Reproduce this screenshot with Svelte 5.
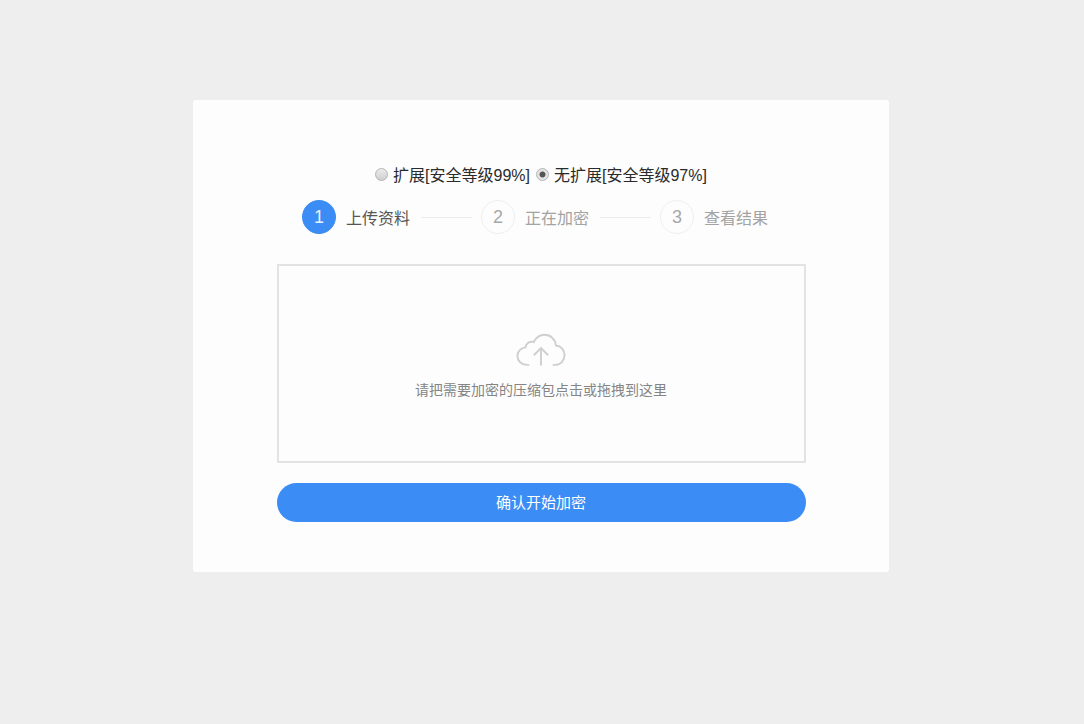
<script>
  let mode = $state('plain')

  const steps = [
    { n: 1, label: '上传资料', active: true },
    { n: 2, label: '正在加密', active: false },
    { n: 3, label: '查看结果', active: false },
  ]
</script>

<main class="page">
  <section class="card">
    <div class="modes">
      <label class="mode">
        <input type="radio" name="mode" value="ext" bind:group={mode} />
        <span>扩展[安全等级99%]</span>
      </label>
      <label class="mode">
        <input type="radio" name="mode" value="plain" bind:group={mode} />
        <span>无扩展[安全等级97%]</span>
      </label>
    </div>

    <ol class="steps">
      {#each steps as s, i}
        {#if i > 0}<li class="line" aria-hidden="true"></li>{/if}
        <li class="step" class:active={s.active}>
          <span class="num">{s.n}</span>
          <span class="label">{s.label}</span>
        </li>
      {/each}
    </ol>

    <div class="drop">
      <svg class="cloud" width="50" height="34" viewBox="0 0 52 34" fill="none" stroke="#cfcfcf" stroke-width="2">
        <path d="M13 32.5H11.500C5.500 32.500 1.500 28.300 1.500 23.300C1.500 18.300 5.200 14.800 9.800 14.300C10.500 9.800 14.500 7.500 18.500 8.700C21 3.800 25 1.200 29.500 1.200C36 1.200 41 6 41.500 12.300C46.800 12.800 50.500 17 50.500 22.300C50.500 28 46.300 32.500 40.500 32.500H39" stroke-linecap="round" />
        <path d="M26 33V15.500M18.500 22.500L26 15L33.500 22.500" />
      </svg>
      <p class="hint">请把需要加密的压缩包点击或拖拽到这里</p>
    </div>

    <button class="submit" type="button">确认开始加密</button>
  </section>
</main>

<style>
  :global(body) {
    margin: 0;
    background: #eeeeee;
  }
  .page {
    height: 724px;
    padding: 100px 0 0 193px;
    box-sizing: border-box;
    font-family: "Liberation Sans", "Noto Sans CJK SC", sans-serif;
    overflow: hidden;
  }
  .card {
    width: 696px;
    height: 472px;
    box-sizing: border-box;
    padding: 65px 83.500px 0 83.500px;
    background: #fdfdfd;
    border-radius: 3px;
  }
  .modes {
    display: flex;
    justify-content: center;
    gap: 6px;
    height: 22px;
    font-size: 16px;
    line-height: 22px;
    color: #2b2b2b;
  }
  .mode {
    display: flex;
    align-items: center;
    gap: 5px;
  }
  .mode input {
    appearance: none;
    width: 13px;
    height: 13px;
    margin: 0 0 3px;
    border: 1px solid #b4b4b4;
    border-radius: 50%;
    background: linear-gradient(#ececec, #cfcfcf);
    box-sizing: border-box;
  }
  .mode input:checked {
    background: radial-gradient(circle, #555 0 2.6px, #e4e4e4 3.4px);
  }
  .steps {
    display: flex;
    align-items: center;
    list-style: none;
    margin: 13px 0 0;
    padding: 0 0 0 25.5px;
    height: 34px;
  }
  .step {
    display: flex;
    align-items: center;
    gap: 10px;
    font-size: 16px;
    color: #a3a3a3;
  }
  .step.active {
    color: #555;
  }
  .num {
    width: 34px;
    height: 34px;
    box-sizing: border-box;
    display: flex;
    align-items: center;
    justify-content: center;
    border: 1px solid #efefef;
    border-radius: 50%;
    font-size: 18px;
    color: #a8a8a8;
  }
  .active .num {
    background: #3c8cf5;
    border-color: #3c8cf5;
    color: #e8f1fd;
  }
  .line {
    width: 51px;
    height: 1px;
    margin: 0 9.500px 0 10.500px;
    background: #ececec;
  }
  .drop {
    height: 199px;
    box-sizing: border-box;
    margin-top: 30px;
    border: 2px solid #e3e3e3;
    display: flex;
    flex-direction: column;
    align-items: center;
    padding-top: 67px;
  }
  .cloud {
    display: block;
  }
  .hint {
    margin: 13px 0 0;
    font-size: 14px;
    line-height: 20px;
    color: #858585;
  }
  .submit {
    display: block;
    width: 100%;
    height: 39px;
    margin-top: 20px;
    border: none;
    border-radius: 20px;
    background: #3c8cf5;
    color: #fff;
    font: inherit;
    font-size: 15px;
    padding: 0 0 2px;
  }
</style>
